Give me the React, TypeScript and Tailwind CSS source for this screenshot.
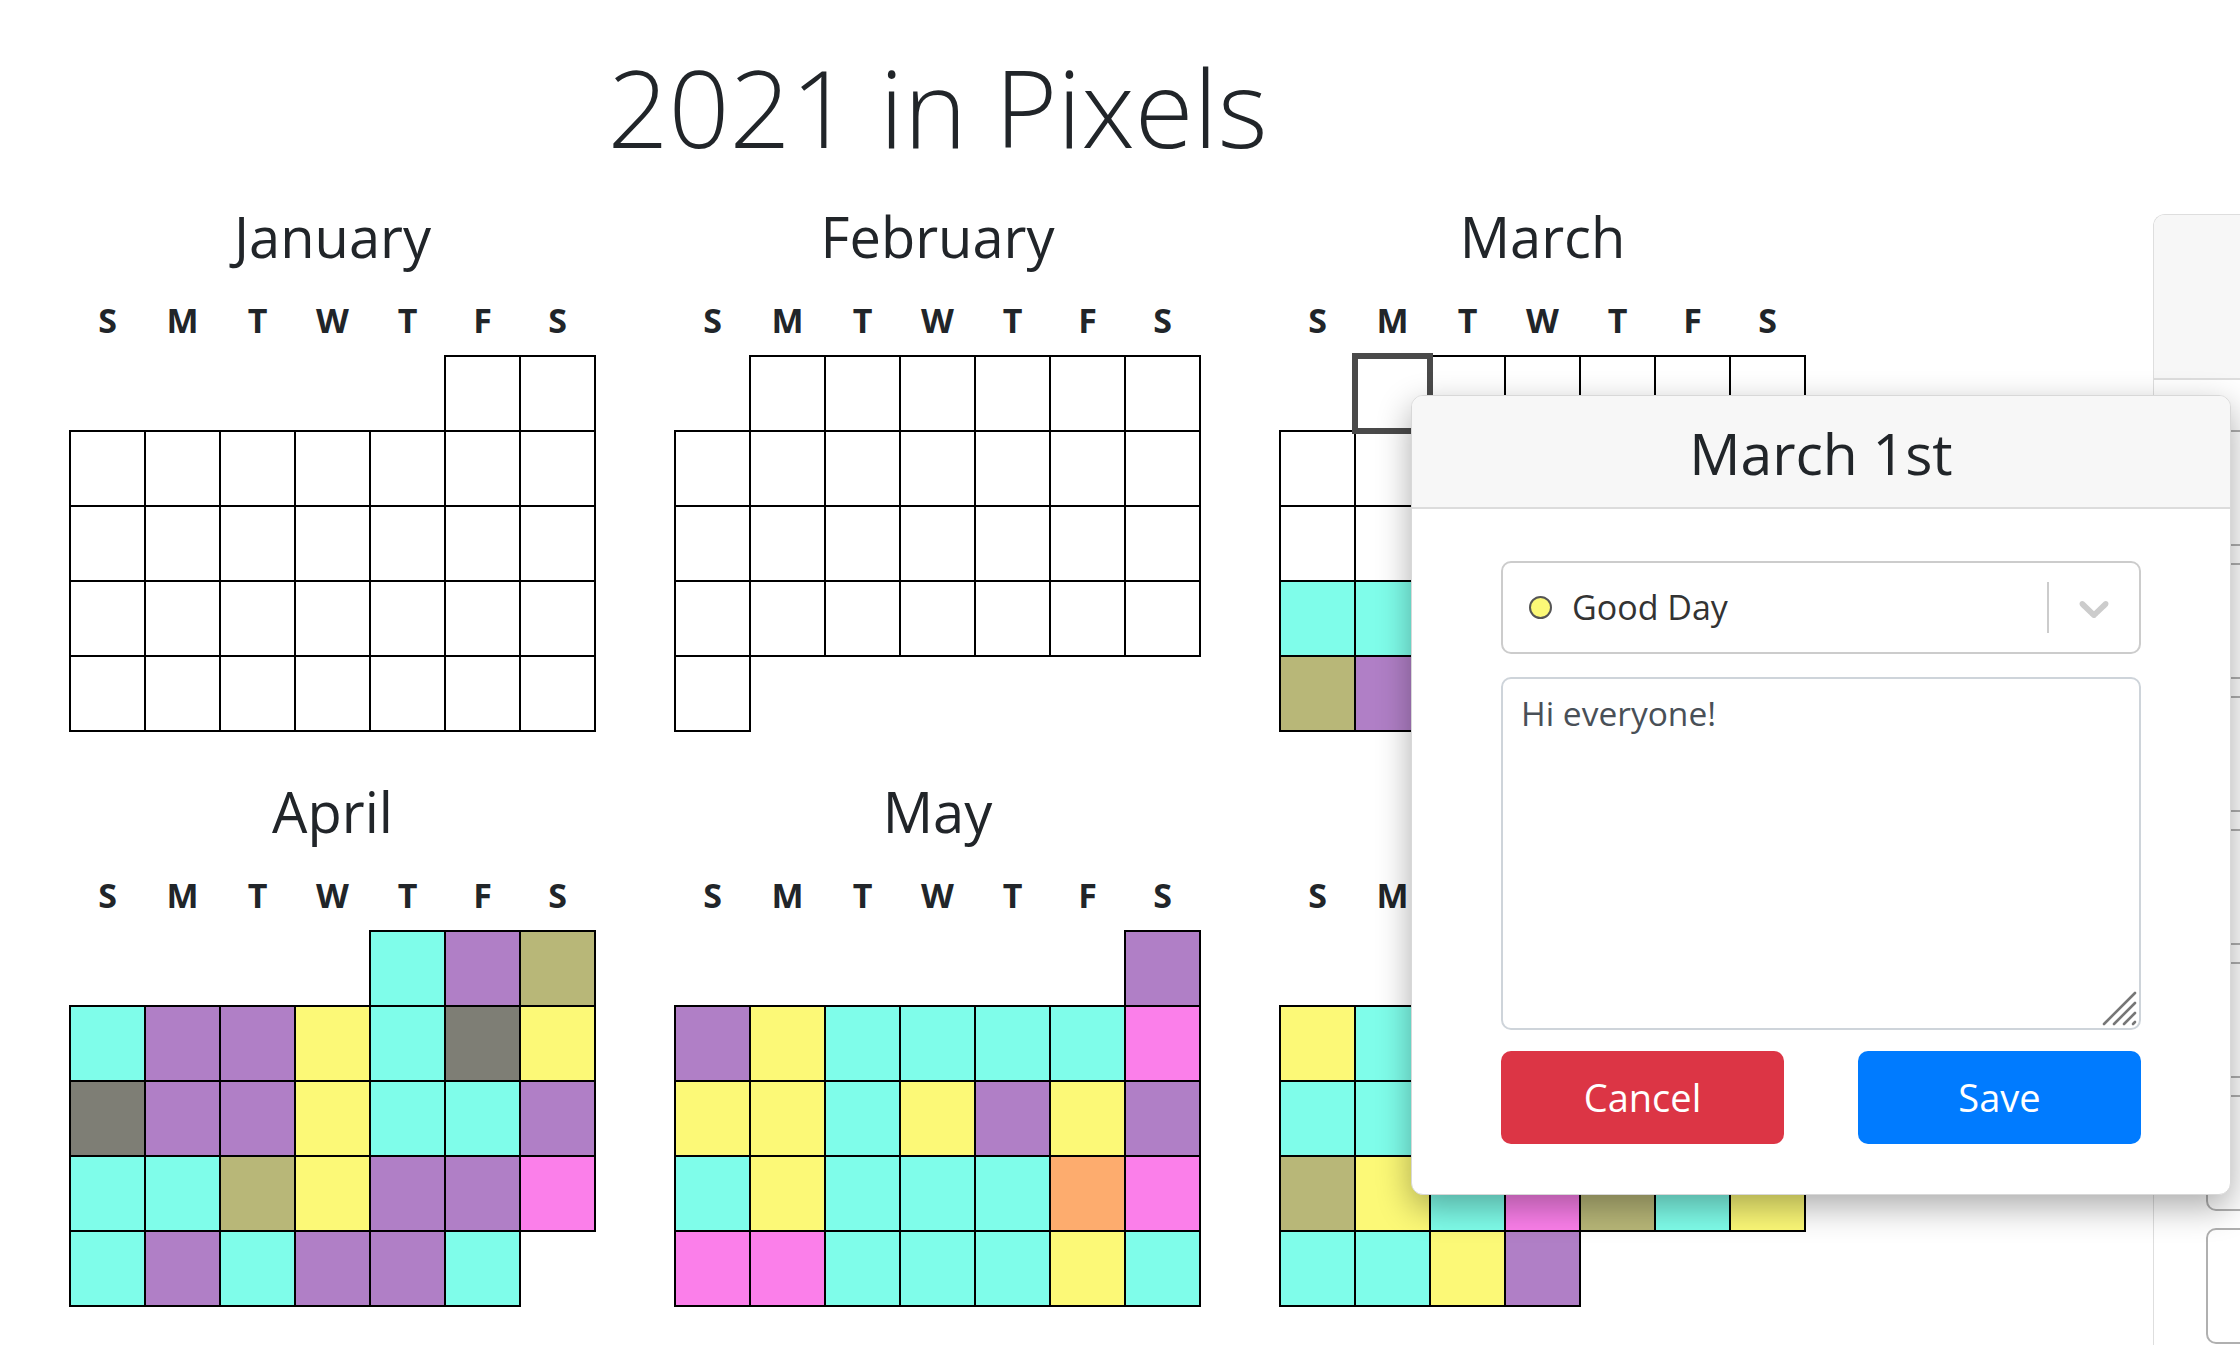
import React from 'react';

// colour of each mood, keyed by a single letter used in the month strings below
const mood: Record<string, string> = {
  w: 'bg-white',
  c: 'bg-[#7ffdea]',
  p: 'bg-[#b07fc6]',
  o: 'bg-[#b8b778]',
  y: 'bg-[#fcf977]',
  g: 'bg-[#7e7e75]',
  k: 'bg-[#fb7fea]',
  r: 'bg-[#fdac6e]',
};

type Month = { name: string; start: number; days: string };

const months: Month[] = [
  { name: 'January', start: 5, days: 'w'.repeat(31) },
  { name: 'February', start: 1, days: 'w'.repeat(28) },
  { name: 'March', start: 1, days: 'w'.repeat(20) + 'ccypcyc' + 'opcy' },
  { name: 'April', start: 4, days: 'cpo' + 'cppycgy' + 'gppyccp' + 'ccoyppk' + 'cpcppc' },
  { name: 'May', start: 6, days: 'p' + 'pycccck' + 'yycypyp' + 'cycccrk' + 'kkcccyc' + 'cc' },
  { name: 'June', start: 2, days: 'cpyck' + 'yccpyyc' + 'ccypcyp' + 'oyckocy' + 'ccyp' },
];

const weekdays = ['S', 'M', 'T', 'W', 'T', 'F', 'S'];

function MonthGrid({ month, selected }: { month: Month; selected?: number }) {
  // only five weeks get drawn, same as the app does
  const slots = Array.from({ length: 35 }, (_, i) => i - month.start + 1);

  return (
    <div>
      <h2 className="text-center text-[56px] leading-[60px] h-[58px]">{month.name}</h2>
      <div className="mt-[39px] grid grid-cols-[repeat(7,75px)] text-[34px] font-bold leading-none h-[34px]">
        {weekdays.map((d, i) => (
          <div key={i} className="text-center">{d}</div>
        ))}
      </div>
      <div className="mt-[19px] grid grid-cols-[repeat(7,75px)] grid-rows-[repeat(5,75px)]">
        {slots.map((day, i) => {
          if (day < 1 || day > month.days.length) return <div key={i} />;
          if (day === selected) {
            return (
              <div
                key={i}
                className="relative z-[1] bg-white outline-[6px] outline-[#4a4a4a] outline-offset-[-3px]"
              />
            );
          }
          return (
            <div
              key={i}
              className={`${mood[month.days[day - 1]]} outline-2 outline-black outline-offset-[-1px]`}
            />
          );
        })}
      </div>
    </div>
  );
}

function DayPopup() {
  return (
    <div className="absolute left-[1411px] top-[395px] z-10 w-[820px] bg-white border border-[#d8d8d8] rounded-[12px] overflow-hidden shadow-[0_12px_34px_rgba(0,0,0,0.33)]">
      <div className="h-[113px] bg-[#f7f7f7] border-b-2 border-[#dcdcdc] flex items-center justify-center">
        <h3 className="text-[57px] leading-none pt-[3px]">March 1st</h3>
      </div>
      <div className="px-[89px] pt-[52px] pb-[50px]">
        {/* mood select */}
        <div className="h-[93px] border-2 border-[#cccccc] rounded-[10px] flex items-center">
          <div className="ml-[26px] w-[23px] h-[23px] rounded-full bg-[#fcf977] border-2 border-[#555555]" />
          <span className="ml-[20px] flex-1 text-[34px] text-[#333333]">Good Day</span>
          <div className="w-[2px] h-[51px] bg-[#cccccc]" />
          <div className="px-[20px]">
            <svg viewBox="0 0 20 20" className="w-[50px] h-[50px] fill-[#cccccc]">
              <path d="M4.516 7.548c0.436-0.446 1.043-0.481 1.576 0l3.908 3.747 3.908-3.747c0.533-0.481 1.141-0.446 1.574 0 0.436 0.445 0.408 1.197 0 1.615-0.406 0.418-4.695 4.502-4.695 4.502-0.217 0.223-0.502 0.335-0.787 0.335s-0.57-0.112-0.789-0.335c0 0-4.287-4.084-4.695-4.502s-0.436-1.17 0-1.615z" />
            </svg>
          </div>
        </div>
        <div className="relative mt-[23px]">
          <textarea
            defaultValue="Hi everyone!"
            className="block w-full h-[353px] resize-none border-2 border-[#ced4da] rounded-[10px] pl-[18px] pt-[10px] text-[33.5px] leading-[48px] text-[#495057] outline-none"
          />
          {/* resize grip, drawn at the page's zoom */}
          <svg viewBox="0 0 36 36" className="absolute right-[4px] bottom-[4px] w-[36px] h-[36px] stroke-[#777777]" strokeWidth="2.6" strokeLinecap="round">
            <line x1="3" y1="34" x2="34" y2="3" />
            <line x1="13" y1="34" x2="34" y2="13" />
            <line x1="23" y1="34" x2="34" y2="23" />
            <line x1="32" y1="34" x2="34" y2="32" />
          </svg>
        </div>
        <div className="mt-[21px] flex justify-between">
          <button className="w-[283px] h-[93px] rounded-[10px] bg-[#dc3545] text-white text-[38px]">Cancel</button>
          <button className="w-[283px] h-[93px] rounded-[10px] bg-[#007bff] text-white text-[38px]">Save</button>
        </div>
      </div>
    </div>
  );
}

export default function App() {
  return (
    <div className="relative w-[2240px] h-[1345px] overflow-hidden bg-white text-[#212529] font-['Open_Sans',sans-serif]">
      <div className="flex">
        <main className="w-[2153px] shrink-0 pl-[70px]">
          <h1 className="w-[1735px] pt-[53px] h-[161px] text-center text-[107px] font-light leading-none">2021 in Pixels</h1>
          <div className="mt-[45px] grid grid-cols-[repeat(3,525px)] gap-x-[80px] gap-y-[50px]">
            {months.map((m) => (
              <MonthGrid key={m.name} month={m} selected={m.name === 'March' ? 1 : undefined} />
            ))}
          </div>
        </main>

        {/* side panel, mostly off screen */}
        <aside className="w-[300px] shrink-0 mt-[214px] h-[1131px] border-l border-t border-[#dedede] rounded-tl-[12px] overflow-hidden">
          <div className="h-[165px] bg-[#f7f7f7] border-b-2 border-[#dedede]" />
          <div className="pl-[52px] pt-[50px] flex flex-col gap-[17px]">
            {Array.from({ length: 7 }, (_, i) => (
              <div key={i} className="h-[116px] border-2 border-[#b0b0b0] rounded-[10px]" />
            ))}
          </div>
        </aside>
      </div>

      <DayPopup />
    </div>
  );
}
